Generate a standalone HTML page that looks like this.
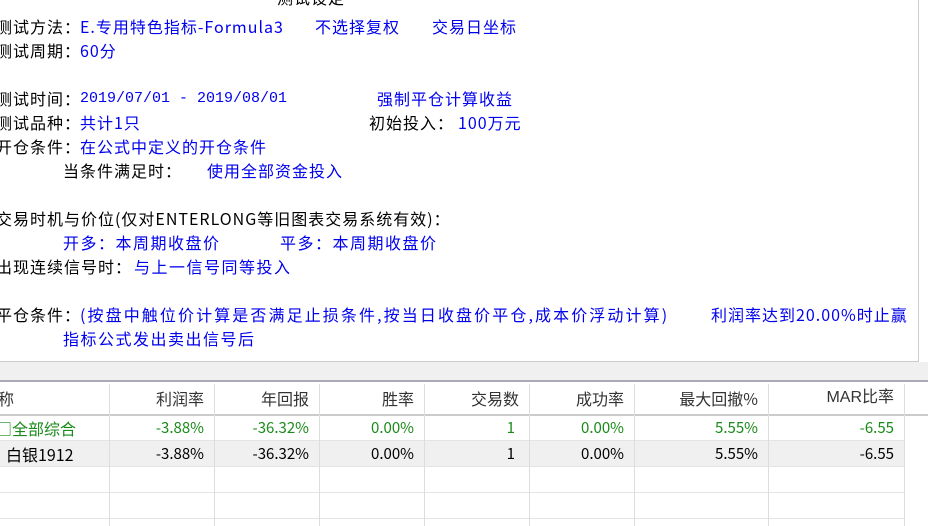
<!DOCTYPE html>
<html><head><meta charset="utf-8"><style>
body{margin:0;width:928px;height:526px;overflow:hidden;background:#fff;position:relative;font-family:"Liberation Sans","Noto Sans CJK SC",sans-serif;}
.t{position:absolute;font-size:16px;line-height:20px;white-space:nowrap;color:#000;letter-spacing:1px;font-family:"Noto Sans CJK SC","WenQuanYi Zen Hei",sans-serif;}
.b{color:#0000ee;}
.m{font-family:"Liberation Mono",monospace;letter-spacing:0;}
#top{position:absolute;left:0;top:0;width:918px;height:361px;border-right:1px solid #ccc;border-bottom:1px solid #ccc;}
#band{position:absolute;left:0;top:362px;width:928px;height:18px;background:#f0f0f0;border-bottom:2px solid #aab;}
.hdr{position:absolute;top:382px;height:32px;background:#fff;border-bottom:2px solid #ccc;}
.cell{position:absolute;font-size:15px;line-height:24px;text-align:right;white-space:nowrap;font-family:"Noto Sans CJK SC",sans-serif;}
.vl{position:absolute;width:1px;background:#ddd;}
.hl{position:absolute;left:0;width:905px;height:1px;background:#e4e4e4;}
</style></head><body>
<div id="top"></div>
<div class="t" style="left:277px;top:-13px">测试设定</div>
<div class="t" style="left:-4px;top:16px">测试方法：</div>
<div class="t b" style="left:80px;top:16px">E.专用特色指标-Formula3</div>
<div class="t b" style="left:315px;top:16px">不选择复权</div>
<div class="t b" style="left:432px;top:16px">交易日坐标</div>
<div class="t" style="left:-4px;top:40px">测试周期：</div>
<div class="t b" style="left:80px;top:40px">60分</div>
<div class="t" style="left:-4px;top:88px">测试时间：</div>
<div class="t b m" style="left:80px;top:89px;font-size:15px">2019/07/01 - 2019/08/01</div>
<div class="t b" style="left:377px;top:88px">强制平仓计算收益</div>
<div class="t" style="left:-4px;top:112px">测试品种：</div>
<div class="t b" style="left:80px;top:112px">共计1只</div>
<div class="t" style="left:369px;top:112px">初始投入：</div>
<div class="t b" style="left:458px;top:112px">100万元</div>
<div class="t" style="left:-4px;top:136px">开仓条件：</div>
<div class="t b" style="left:80px;top:136px">在公式中定义的开仓条件</div>
<div class="t" style="left:63px;top:160px">当条件满足时：</div>
<div class="t b" style="left:207px;top:160px">使用全部资金投入</div>
<div class="t" style="left:-4px;top:208px;letter-spacing:1px">交易时机与价位(仅对ENTERLONG等旧图表交易系统有效)：</div>
<div class="t b" style="left:63px;top:232px;letter-spacing:1.5px">开多：本周期收盘价</div>
<div class="t b" style="left:280px;top:232px;letter-spacing:1.5px">平多：本周期收盘价</div>
<div class="t" style="left:-4px;top:256px;letter-spacing:1px">出现连续信号时：</div>
<div class="t b" style="left:134px;top:256px;letter-spacing:1.5px">与上一信号同等投入</div>
<div class="t" style="left:-4px;top:304px;letter-spacing:1px">平仓条件：</div>
<div class="t b" style="left:80px;top:304px;letter-spacing:2.1px">(按盘中触位价计算是否满足止损条件,按当日收盘价平仓,成本价浮动计算)</div>
<div class="t b" style="left:711px;top:304px;letter-spacing:1px">利润率达到20.00%时止赢</div>
<div class="t b" style="left:63px;top:328px;letter-spacing:1.5px">指标公式发出卖出信号后</div>
<div id="band"></div>
<div class="hdr" style="left:0;width:928px"></div>
<div style="position:absolute;left:0;top:441px;width:905px;height:25px;background:#f0f0f0"></div>
<div class="hl" style="top:440px"></div>
<div class="hl" style="top:466px"></div>
<div class="hl" style="top:492px"></div>
<div class="hl" style="top:518px"></div>
<div class="vl" style="left:109px;top:384px;height:142px"></div>
<div class="vl" style="left:214px;top:384px;height:142px"></div>
<div class="vl" style="left:319px;top:384px;height:142px"></div>
<div class="vl" style="left:424px;top:384px;height:142px"></div>
<div class="vl" style="left:529px;top:384px;height:142px"></div>
<div class="vl" style="left:634px;top:384px;height:142px"></div>
<div class="vl" style="left:768px;top:384px;height:142px"></div>
<div class="vl" style="left:904px;top:384px;height:142px"></div>
<div class="cell" style="left:-2px;top:386px;text-align:left;color:#333;font-size:16px">称</div>
<div class="cell" style="right:724px;top:386px;color:#333;font-size:16px">利润率</div>
<div class="cell" style="right:619px;top:386px;color:#333;font-size:16px">年回报</div>
<div class="cell" style="right:514px;top:386px;color:#333;font-size:16px">胜率</div>
<div class="cell" style="right:409px;top:386px;color:#333;font-size:16px">交易数</div>
<div class="cell" style="right:304px;top:386px;color:#333;font-size:16px">成功率</div>
<div class="cell" style="right:170px;top:386px;color:#333;font-size:16px">最大回撤%</div>
<div class="cell" style="right:34px;top:386px;color:#333;font-size:16px;font-family:'Liberation Sans','Noto Sans CJK SC',sans-serif">MAR比率</div>
<div style="color:#1a8a1a">
<div class="cell" style="left:-4px;top:416px;text-align:left;font-size:16px">□全部综合</div>
<div class="cell" style="right:724px;top:416px">-3.88%</div>
<div class="cell" style="right:619px;top:416px">-36.32%</div>
<div class="cell" style="right:514px;top:416px">0.00%</div>
<div class="cell" style="right:413px;top:416px">1</div>
<div class="cell" style="right:304px;top:416px">0.00%</div>
<div class="cell" style="right:170px;top:416px">5.55%</div>
<div class="cell" style="right:34px;top:416px">-6.55</div>
</div>
<div style="color:#000">
<div class="cell" style="left:6px;top:442px;text-align:left;font-size:16px">白银1912</div>
<div class="cell" style="right:724px;top:442px">-3.88%</div>
<div class="cell" style="right:619px;top:442px">-36.32%</div>
<div class="cell" style="right:514px;top:442px">0.00%</div>
<div class="cell" style="right:413px;top:442px">1</div>
<div class="cell" style="right:304px;top:442px">0.00%</div>
<div class="cell" style="right:170px;top:442px">5.55%</div>
<div class="cell" style="right:34px;top:442px">-6.55</div>
</div>
</body></html>
